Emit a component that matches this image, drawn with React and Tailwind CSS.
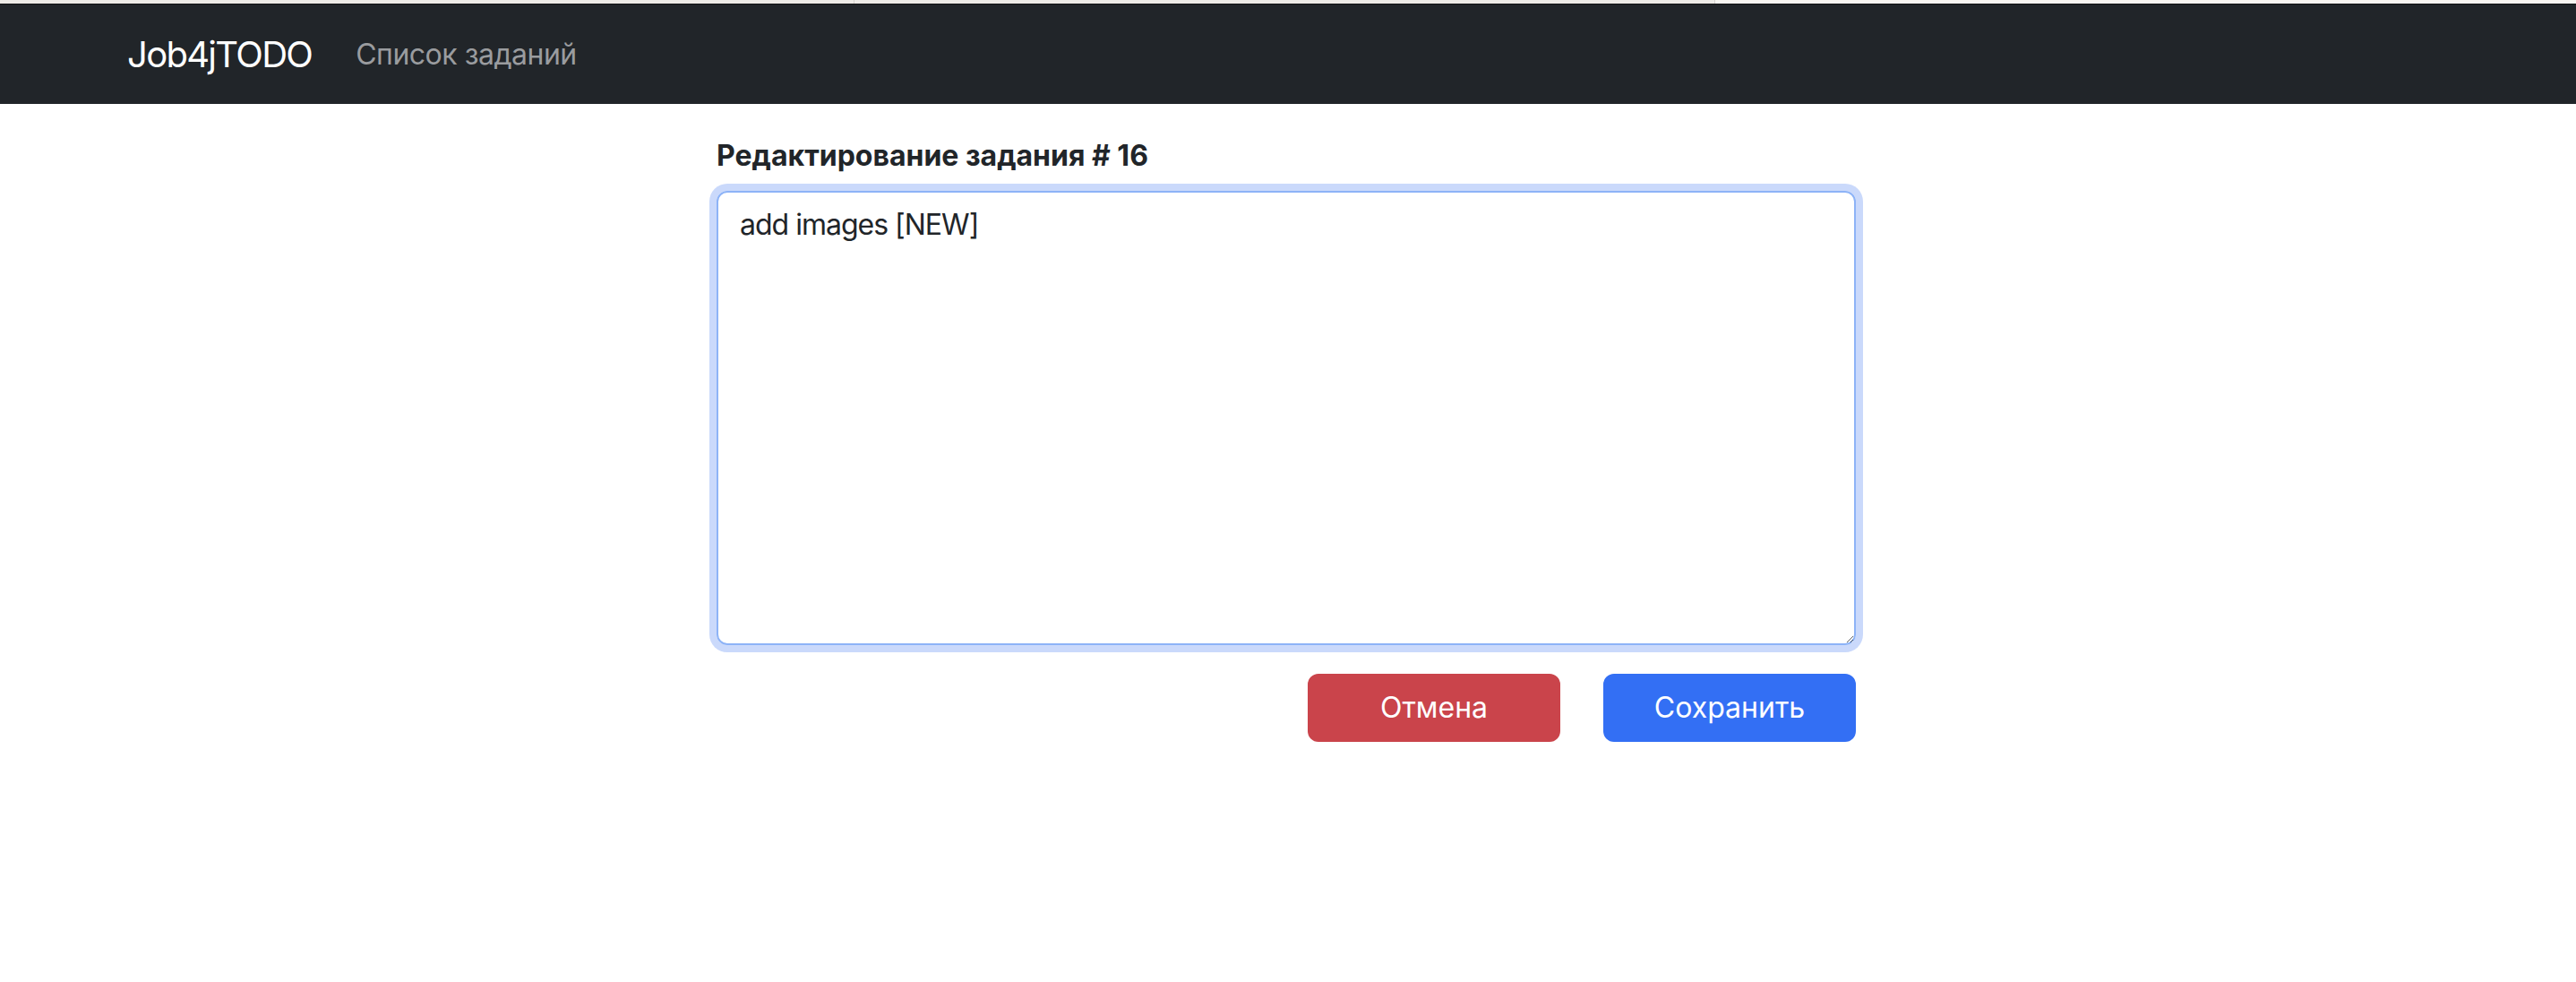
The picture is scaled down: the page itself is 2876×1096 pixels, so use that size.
import React from "react";

const font = { fontFamily: "Inter, 'Noto Sans', sans-serif" };

const App = () => {
  return (
    <div className="min-h-[1096px] bg-white text-[#212529]" style={font}>
      {/* browser tab strip remnant */}
      <div className="flex h-[4px]">
        <div className="w-[954px] bg-[#eeece7] border-r border-[#d6d3ce]" />
        <div className="w-[961px] bg-[#eeece7] border-r border-[#d6d3ce]" />
        <div className="flex-1 bg-[#f8f6f1]" />
      </div>
      <div className="h-[1px] bg-[#111214]" />

      <nav className="h-[111px] bg-[#212529] flex items-center pl-[142px]">
        <span className="text-[40px] leading-[60px] text-white tracking-[-1.7px]">
          Job4jTODO
        </span>
        <a href="#" className="ml-[49px] text-[32px] leading-[48px] text-[#9a9c9f] tracking-[-0.5px]">
          Список заданий
        </a>
      </nav>

      <main className="w-[1272px] ml-[800px]">
        <h5 className="mt-[34px] mb-[15px] text-[32px] leading-[48px] font-bold">
          Редактирование задания # 16
        </h5>
        <textarea
          defaultValue="add images [NEW]"
          className="block w-full h-[507px] px-[24px] py-[12px] text-[32px] leading-[48px] tracking-[-1px] text-[#212529] border-2 border-[#8db3f7] rounded-[12px] shadow-[0_0_0_8px_#cad9fb] outline-none"
        />
        <div className="mt-[32px] flex justify-end gap-[48px]">
          <button className="w-[282px] h-[76px] rounded-[12px] bg-[#ca444b] text-white text-[32px]">
            Отмена
          </button>
          <button className="w-[282px] h-[76px] rounded-[12px] bg-[#336ff4] text-white text-[32px]">
            Сохранить
          </button>
        </div>
      </main>
    </div>
  );
};

export default App;
